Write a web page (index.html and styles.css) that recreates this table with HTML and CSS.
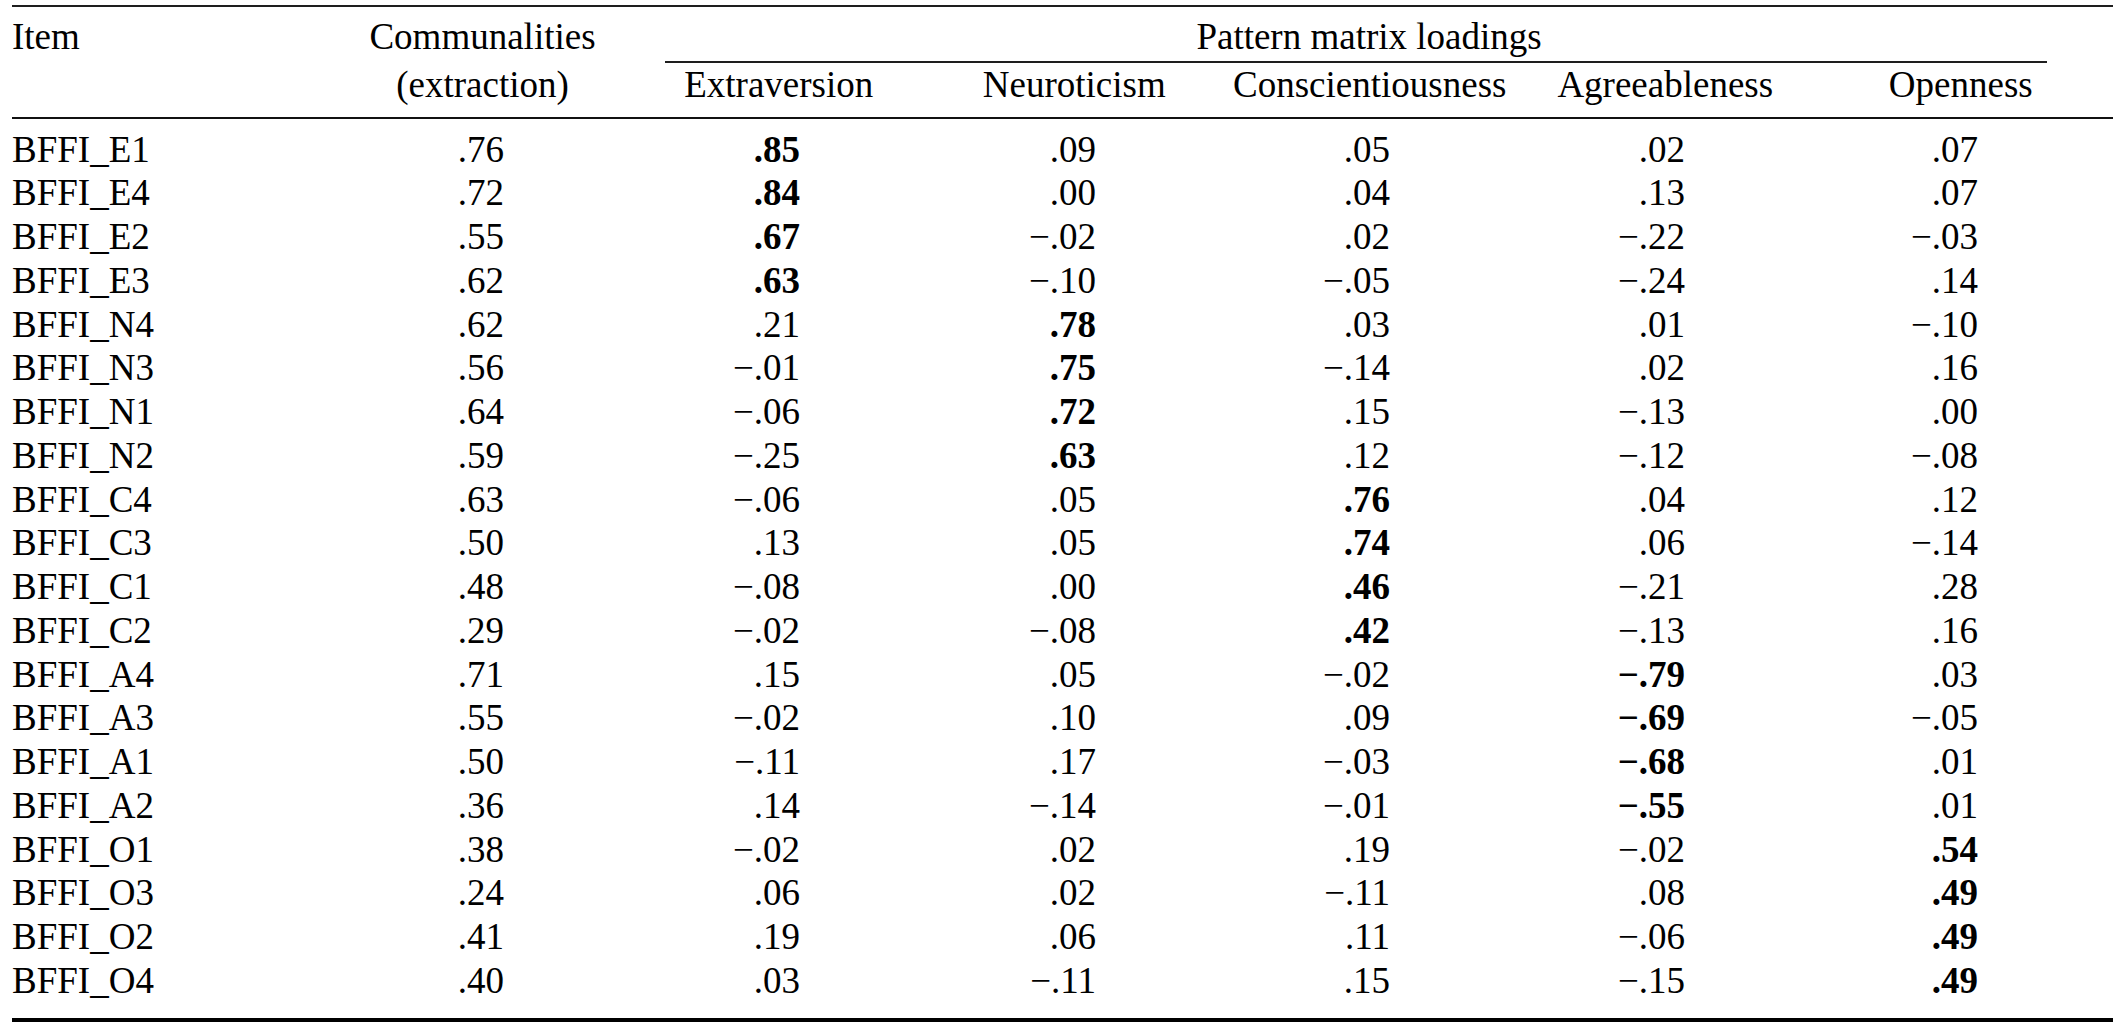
FILE: index.html
```html
<!DOCTYPE html>
<html lang="en">
<head>
<meta charset="utf-8">
<title>Pattern matrix loadings</title>
<link rel="stylesheet" href="styles.css">
</head>
<body>
<div class="page">
<table class="loadings">
  <colgroup>
    <col class="c-item">
    <col class="c-comm">
    <col class="c-f">
    <col class="c-f">
    <col class="c-f">
    <col class="c-f">
    <col class="c-last">
  </colgroup>
  <thead>
    <tr>
      <th class="h-item" rowspan="2">Item</th>
      <th class="h-comm" rowspan="2">Communalities<br>(extraction)</th>
      <th class="h-span" colspan="5">
        <div class="span-title">Pattern matrix loadings</div>
        <div class="span-rule"></div>
      </th>
    </tr>
    <tr>
      <th class="h-f">Extraversion</th>
      <th class="h-f">Neuroticism</th>
      <th class="h-f">Conscientiousness</th>
      <th class="h-f">Agreeableness</th>
      <th class="h-f h-last">Openness</th>
    </tr>
  </thead>
  <tbody>
    <tr><td>BFFI_E1</td><td>.76</td><td class="hl">.85</td><td>.09</td><td>.05</td><td>.02</td><td>.07</td></tr>
    <tr><td>BFFI_E4</td><td>.72</td><td class="hl">.84</td><td>.00</td><td>.04</td><td>.13</td><td>.07</td></tr>
    <tr><td>BFFI_E2</td><td>.55</td><td class="hl">.67</td><td>&minus;.02</td><td>.02</td><td>&minus;.22</td><td>&minus;.03</td></tr>
    <tr><td>BFFI_E3</td><td>.62</td><td class="hl">.63</td><td>&minus;.10</td><td>&minus;.05</td><td>&minus;.24</td><td>.14</td></tr>
    <tr><td>BFFI_N4</td><td>.62</td><td>.21</td><td class="hl">.78</td><td>.03</td><td>.01</td><td>&minus;.10</td></tr>
    <tr><td>BFFI_N3</td><td>.56</td><td>&minus;.01</td><td class="hl">.75</td><td>&minus;.14</td><td>.02</td><td>.16</td></tr>
    <tr><td>BFFI_N1</td><td>.64</td><td>&minus;.06</td><td class="hl">.72</td><td>.15</td><td>&minus;.13</td><td>.00</td></tr>
    <tr><td>BFFI_N2</td><td>.59</td><td>&minus;.25</td><td class="hl">.63</td><td>.12</td><td>&minus;.12</td><td>&minus;.08</td></tr>
    <tr><td>BFFI_C4</td><td>.63</td><td>&minus;.06</td><td>.05</td><td class="hl">.76</td><td>.04</td><td>.12</td></tr>
    <tr><td>BFFI_C3</td><td>.50</td><td>.13</td><td>.05</td><td class="hl">.74</td><td>.06</td><td>&minus;.14</td></tr>
    <tr><td>BFFI_C1</td><td>.48</td><td>&minus;.08</td><td>.00</td><td class="hl">.46</td><td>&minus;.21</td><td>.28</td></tr>
    <tr><td>BFFI_C2</td><td>.29</td><td>&minus;.02</td><td>&minus;.08</td><td class="hl">.42</td><td>&minus;.13</td><td>.16</td></tr>
    <tr><td>BFFI_A4</td><td>.71</td><td>.15</td><td>.05</td><td>&minus;.02</td><td class="hl">&minus;.79</td><td>.03</td></tr>
    <tr><td>BFFI_A3</td><td>.55</td><td>&minus;.02</td><td>.10</td><td>.09</td><td class="hl">&minus;.69</td><td>&minus;.05</td></tr>
    <tr><td>BFFI_A1</td><td>.50</td><td>&minus;.11</td><td>.17</td><td>&minus;.03</td><td class="hl">&minus;.68</td><td>.01</td></tr>
    <tr><td>BFFI_A2</td><td>.36</td><td>.14</td><td>&minus;.14</td><td>&minus;.01</td><td class="hl">&minus;.55</td><td>.01</td></tr>
    <tr><td>BFFI_O1</td><td>.38</td><td>&minus;.02</td><td>.02</td><td>.19</td><td>&minus;.02</td><td class="hl">.54</td></tr>
    <tr><td>BFFI_O3</td><td>.24</td><td>.06</td><td>.02</td><td>&minus;.11</td><td>.08</td><td class="hl">.49</td></tr>
    <tr><td>BFFI_O2</td><td>.41</td><td>.19</td><td>.06</td><td>.11</td><td>&minus;.06</td><td class="hl">.49</td></tr>
    <tr><td>BFFI_O4</td><td>.40</td><td>.03</td><td>&minus;.11</td><td>.15</td><td>&minus;.15</td><td class="hl">.49</td></tr>
  </tbody>
</table>
</div>
</body>
</html>
```

FILE: styles.css
```css
html, body {
  margin: 0;
  padding: 0;
  background: #ffffff;
}

.page {
  padding: 5px 0 0 12px;
}

.loadings {
  width: 2101px;
  table-layout: fixed;
  border-collapse: separate;
  border-spacing: 0;
  border-top: 2px solid #1e1e1e;
  border-bottom: 4px solid #000000;
  font-family: "Liberation Serif", "Times New Roman", serif;
  font-size: 37px;
  color: #000000;
}

.c-item { width: 319px; }
.c-comm { width: 300px; }
.c-f { width: 295.5px; }
.c-last { width: 300px; }

.loadings th {
  font-weight: normal;
  padding: 0;
  vertical-align: top;
  white-space: nowrap;
}

.h-item {
  text-align: left;
  line-height: 40px;
  padding-top: 9.5px !important;
  border-bottom: 2px solid #111111;
}

.h-comm {
  text-align: center;
  line-height: 48px;
  padding-top: 5.5px !important;
  padding-left: 3px !important;
  border-bottom: 2px solid #111111;
}

.h-span {
  text-align: center;
  line-height: 40px;
  padding-top: 9.5px !important;
}

.span-title {
  padding-right: 6px;
}

.span-rule {
  height: 2px;
  margin: 4.5px 66px 0 34px;
  background: #1e1e1e;
}

.h-f {
  text-align: center;
  line-height: 40px;
  padding: 1.5px 0 12.5px 0 !important;
  border-bottom: 2px solid #111111;
}

.h-last {
  padding-right: 4.5px !important;
}

.loadings td {
  padding: 0 127px 0 0;
  line-height: 43.75px;
  text-align: right;
  white-space: nowrap;
}

.loadings td:first-child {
  text-align: left;
  padding: 0;
}

.loadings td:nth-child(2) { padding-right: 127px; }
.loadings td:nth-child(3) { padding-right: 126.5px; }
.loadings td:nth-child(4) { padding-right: 126px; }
.loadings td:nth-child(5) { padding-right: 127.5px; }
.loadings td:nth-child(6) { padding-right: 128px; }
.loadings td:nth-child(7) { padding-right: 135px; }

.loadings tbody tr:first-child td {
  padding-top: 8.6px;
}

.loadings tbody tr:last-child td {
  padding-bottom: 15.6px;
}

.hl {
  font-weight: bold;
}
```
